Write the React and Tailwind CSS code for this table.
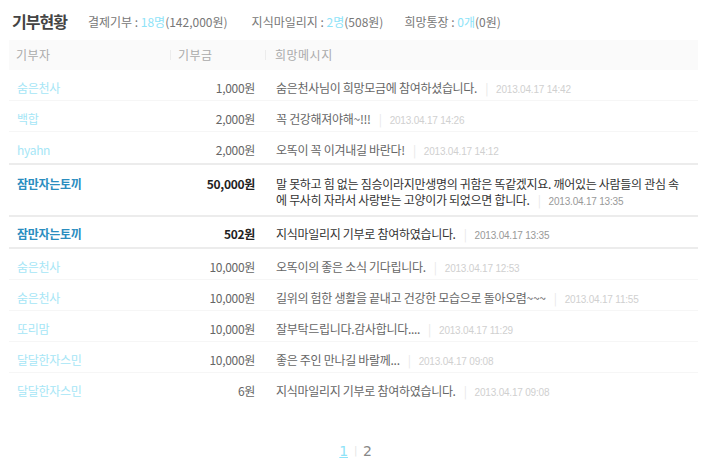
const donations = [
  { name: '숨은천사', amount: '1,000원', msg: '숨은천사님이 희망모금에 참여하셨습니다.', date: '2013.04.17 14:42' },
  { name: '백합', amount: '2,000원', msg: '꼭 건강해져야해~!!!', date: '2013.04.17 14:26' },
  { name: 'hyahn', amount: '2,000원', msg: '오똑이 꼭 이겨내길 바란다!', date: '2013.04.17 14:12' },
  {
    name: '잠만자는토끼',
    amount: '50,000원',
    msg: ['말 못하고 힘 없는 짐승이라지만생명의 귀함은 똑같겠지요. 깨어있는 사람들의 관심 속', '에 무사히 자라서 사랑받는 고양이가 되었으면 합니다.'],
    date: '2013.04.17 13:35',
    strong: true,
  },
  { name: '잠만자는토끼', amount: '502원', msg: '지식마일리지 기부로 참여하였습니다.', date: '2013.04.17 13:35', strong: true },
  { name: '숨은천사', amount: '10,000원', msg: '오똑이의 좋은 소식 기다립니다.', date: '2013.04.17 12:53' },
  { name: '숨은천사', amount: '10,000원', msg: '길위의 험한 생활을 끝내고 건강한 모습으로 돌아오렴~~~', date: '2013.04.17 11:55' },
  { name: '또리맘', amount: '10,000원', msg: '잘부탁드립니다.감사합니다....', date: '2013.04.17 11:29' },
  { name: '달달한자스민', amount: '10,000원', msg: '좋은 주인 만나길 바랄께...', date: '2013.04.17 09:08' },
  { name: '달달한자스민', amount: '6원', msg: '지식마일리지 기부로 참여하였습니다.', date: '2013.04.17 09:08' },
];

const Stamp = ({ date, strong }) => (
  <>
    <span className="mx-[8px] text-[#e8e8e8]">|</span>
    <span className={`font-['Liberation_Sans',sans-serif] text-[10px] tracking-[-0.2px] ${strong ? 'text-[#999]' : 'text-[#d0d0d0]'}`}>
      {date}
    </span>
  </>
);

// fixed row boxes (border included) so the pitch matches the original table
const rowBox = (d, i, thick, last) => {
  if (Array.isArray(d.msg)) return 'h-[52px] pt-[11px] border-b-2 border-[#ececec]';
  if (d.strong) return 'h-[32px] pt-[9px] border-b-2 border-[#ececec]';
  if (last) return 'h-[31px] pt-[10px]';
  if (thick) return 'h-[33px] pt-[10px] border-b-2 border-[#ececec]';
  return 'h-[31px] pt-[10px] border-b border-[#f6f6f6]';
};

const App = () => {
  return (
    <div className="w-[720px] h-[470px] bg-white font-['Noto_Sans_CJK_KR',sans-serif] text-[12px] tracking-[-0.3px] text-[#666] overflow-hidden">
      {/* Title + stats */}
      <div className="flex items-end pl-[12px] pt-[9px] h-[32px]">
        <h2 className="text-[16px] leading-[22px] font-bold text-[#444] tracking-[-1px]">기부현황</h2>
        <div className="flex ml-[21px] mb-[2px] leading-[16px] text-[#777] tracking-[0px]">
          <span>
            결제기부 : <span className="text-[#8ee3f8]">18명</span>(142,000원)
          </span>
          <span className="ml-[24px]">
            지식마일리지 : <span className="text-[#8ee3f8]">2명</span>(508원)
          </span>
          <span className="ml-[21px]">
            희망통장 : <span className="text-[#8ee3f8]">0개</span>(0원)
          </span>
        </div>
      </div>

      {/* Table */}
      <div className="ml-[9px] mt-[8px] w-[689px]">
        <div className="flex items-center h-[30px] bg-[#fafafa] text-[#aaa] tracking-[0.5px]">
          <div className="w-[161px] pl-[7px]">기부자</div>
          <div className="w-[95px] flex items-center">
            <span className="h-[10px] w-px bg-[#ececec]" />
            <span className="ml-[7px]">기부금</span>
          </div>
          <div className="flex-1 flex items-center">
            <span className="h-[10px] w-px bg-[#ececec]" />
            <span className="ml-[9px]">희망메시지</span>
          </div>
        </div>

        {donations.map((d, i) => {
          const next = donations[i + 1];
          const thick = next && next.strong;
          const last = i === donations.length - 1;
          return (
            <div key={i} className={`flex items-start overflow-hidden ${rowBox(d, i, thick, last)}`}>
              <div
                className={`w-[161px] pl-[8px] leading-[16px] ${
                  d.strong ? 'text-[#2a8dbf] font-bold' : 'text-[#a6e6f6]'
                }`}
              >
                {d.name}
              </div>
              <div
                className={`w-[85px] text-right leading-[16px] ${
                  d.strong ? 'text-[#222] font-bold' : 'text-[#666]'
                }`}
              >
                {d.amount}
              </div>
              <div className={`flex-1 pl-[21px] leading-[16px] ${d.strong ? 'text-[#333]' : 'text-[#666]'}`}>
                {Array.isArray(d.msg) ? (
                  <>
                    {d.msg[0]}
                    <br />
                    {d.msg[1]}
                    <Stamp date={d.date} strong={d.strong} />
                  </>
                ) : (
                  <>
                    {d.msg}
                    <Stamp date={d.date} strong={d.strong} />
                  </>
                )}
              </div>
            </div>
          );
        })}
      </div>

      {/* Pagination */}
      <div className="flex justify-center items-center mt-[37px] text-[14px] leading-[20px] font-['DejaVu_Sans',sans-serif] mr-[9px]">
        <span className="text-[#8ee3f8] underline">1</span>
        <span className="mx-[6px] text-[10px] text-[#e5e5e5]">|</span>
        <span className="text-[#888]">2</span>
      </div>
    </div>
  );
};

export default App;
